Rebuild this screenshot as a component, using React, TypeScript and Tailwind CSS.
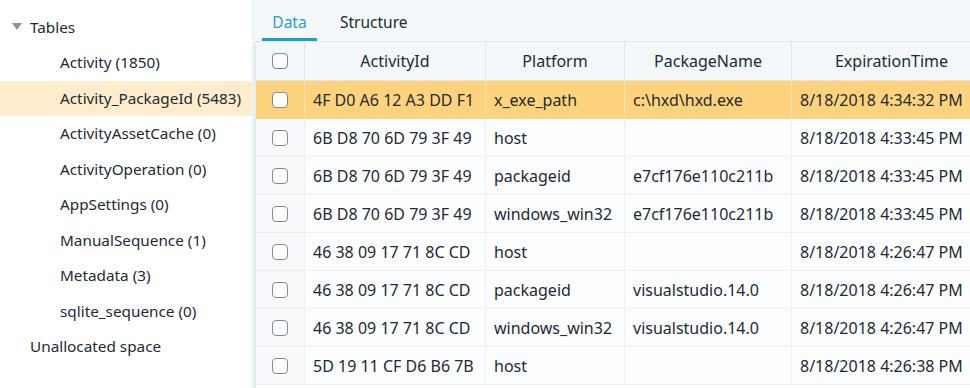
import React from "react";

const tables = [
  "Activity (1850)",
  "Activity_PackageId (5483)",
  "ActivityAssetCache (0)",
  "ActivityOperation (0)",
  "AppSettings (0)",
  "ManualSequence (1)",
  "Metadata (3)",
  "sqlite_sequence (0)",
];

const rows = [
  ["4F D0 A6 12 A3 DD F1", "x_exe_path", "c:\\hxd\\hxd.exe", "8/18/2018 4:34:32 PM"],
  ["6B D8 70 6D 79 3F 49", "host", "", "8/18/2018 4:33:45 PM"],
  ["6B D8 70 6D 79 3F 49", "packageid", "e7cf176e110c211b", "8/18/2018 4:33:45 PM"],
  ["6B D8 70 6D 79 3F 49", "windows_win32", "e7cf176e110c211b", "8/18/2018 4:33:45 PM"],
  ["46 38 09 17 71 8C CD", "host", "", "8/18/2018 4:26:47 PM"],
  ["46 38 09 17 71 8C CD", "packageid", "visualstudio.14.0", "8/18/2018 4:26:47 PM"],
  ["46 38 09 17 71 8C CD", "windows_win32", "visualstudio.14.0", "8/18/2018 4:26:47 PM"],
  ["5D 19 11 CF D6 B6 7B", "host", "", "8/18/2018 4:26:38 PM"],
];

const Checkbox = () => (
  <div className="w-[16px] h-[16px] rounded-[4px] border-[1.5px] border-[#7d8a96] bg-white" />
);

export default function App() {
  return (
    <div
      className="flex w-[970px] h-[388px] overflow-hidden text-[#1e2a33]"
      style={{ fontFamily: '"Noto Sans", "Open Sans", sans-serif' }}
    >
      {/* Sidebar */}
      <div className="w-[252px] shrink-0 bg-white pt-[9px] text-[15.3px]">
        <div className="flex items-center h-[36px] pl-[12px]">
          <svg width="10" height="8" viewBox="0 0 10 8" className="mr-[8px]">
            <path d="M0 0 L10 0 L5 7 Z" fill="#8a969f" />
          </svg>
          <span>Tables</span>
        </div>
        {tables.map((t, i) => (
          <div
            key={t}
            className={`flex items-center h-[35.5px] pl-[60px] whitespace-nowrap ${i === 1 ? "bg-[#fdedcc]" : ""}`}
          >
            {t}
          </div>
        ))}
        <div className="flex items-center h-[35.5px] pl-[30px]">Unallocated space</div>
      </div>

      {/* Divider */}
      <div className="w-[2px] shrink-0 bg-[#eef2f5]" />

      {/* Main */}
      <div className="flex-1 bg-[#f5f8fa] flex flex-col min-w-0">
        <div className="h-[41px] flex items-end pl-[8px] text-[15.5px] shrink-0">
          <div className="flex flex-col items-center w-[55px]">
            <span className="text-[#2a9fd0] leading-[20px] mb-[6px]">Data</span>
            <div className="h-[3px] w-full bg-[#1ca0cf]" />
          </div>
          <div className="ml-[23px] pb-[9px] leading-[20px]">Structure</div>
        </div>

        <div className="flex-1 bg-[#f5f8fa]">
          <div className="border-l-[2px] border-[#e6ebef] h-full bg-white text-[16px]">
            {/* header */}
            <div className="grid grid-cols-[49px_181px_139px_167px_200px] h-[40px] bg-[#f3f7f9] border-t border-b border-[#dfe5ea]">
              <div className="flex items-center justify-center border-r border-[#dfe5ea]">
                <Checkbox />
              </div>
              {["ActivityId", "Platform", "PackageName", "ExpirationTime"].map((h) => (
                <div
                  key={h}
                  className="flex items-center justify-center border-r border-[#dfe5ea]"
                >
                  {h}
                </div>
              ))}
            </div>
            {rows.map((r, i) => {
              const sel = i === 0;
              return (
                <div
                  key={i}
                  className={`grid grid-cols-[49px_181px_139px_167px_200px] h-[38px] border-b ${
                    sel ? "bg-[#fed37d] border-[#fed37d]" : "bg-[#fcfdfe] border-[#eef1f4]"
                  }`}
                >
                  <div
                    className={`flex items-center justify-center border-r ${
                      sel ? "border-[#f5e2bc]" : "bg-[#f7f9fb] border-[#eef1f4]"
                    }`}
                  >
                    <Checkbox />
                  </div>
                  {r.map((c, j) => (
                    <div
                      key={j}
                      className={`flex items-center pl-[8px] whitespace-nowrap border-r ${
                        sel ? "border-[#f5e2bc]" : "border-[#eef1f4]"
                      }`}
                    >
                      {c}
                    </div>
                  ))}
                </div>
              );
            })}
          </div>
        </div>
      </div>
    </div>
  );
}
